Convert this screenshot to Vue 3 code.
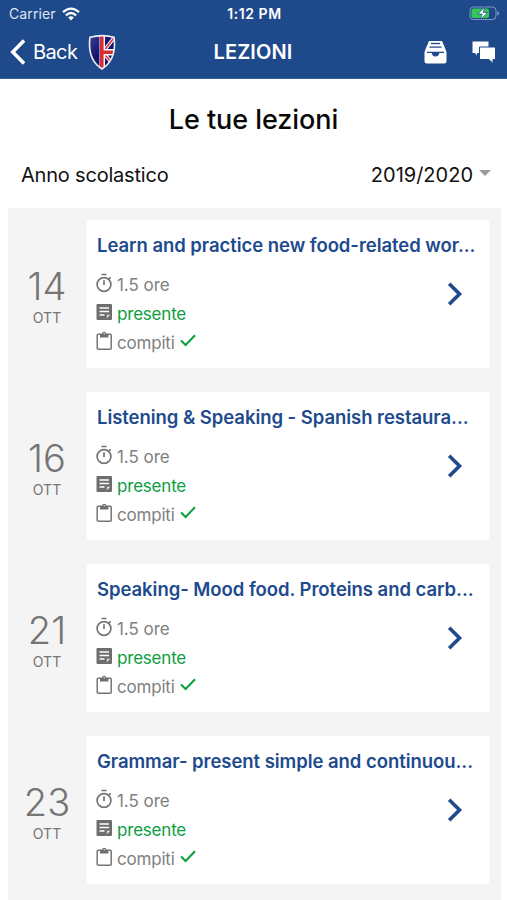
<template>
  <div class="screen">
    <header class="header">
      <!-- Status bar -->
      <div class="status-bar">
        <div class="carrier">
          <span>Carrier</span>
          <svg class="wifi" viewBox="0 0 18 14" fill="none" stroke="#fff" stroke-width="2.3">
            <path d="M1 5.2Q9-2 17 5.2" />
            <path d="M3.9 8.3Q9 3.7 14.1 8.3" />
            <path d="M6.2 10.4Q9 8 11.8 10.4L9 13.5Z" fill="#fff" stroke="none" />
          </svg>
        </div>
        <div class="clock">1:12 PM</div>
        <svg class="battery" viewBox="0 0 31 15">
          <rect x="1" y="1" width="26" height="12.5" rx="3.5" fill="none" stroke="#7f9bc4" />
          <rect x="2.5" y="2.5" width="17.5" height="9.5" rx="2" fill="#35c759" />
          <path d="M28.3 5v4.6q1.8-.7 1.8-2.3T28.3 5Z" fill="#7f9bc4" />
          <path d="M15.5 1.2L8.8 8h4.4l-1.6 5.4L18.6 6.5h-4.4Z" fill="#fff" stroke="#1e498b" stroke-width=".7" />
        </svg>
      </div>

      <!-- Navigation bar -->
      <div class="nav-bar">
        <div class="nav-left">
          <svg class="back-arrow" viewBox="0 0 16 26" fill="none" stroke="#fff" stroke-width="3.6">
            <path d="M14 1.5L2.8 13L14 24.5" />
          </svg>
          <span class="back">Back</span>
          <svg class="crest" viewBox="0 0 28 36">
            <defs>
              <clipPath id="shield">
                <path d="M2 2.700Q14-.5 26 2.700Q29 25 14 34.500Q-1 25 2 2.700Z" />
              </clipPath>
              <linearGradient id="navy" x1="0" y1="0" x2="1" y2="1">
                <stop offset="0" stop-color="#41459a" />
                <stop offset=".45" stop-color="#14146c" />
              </linearGradient>
            </defs>
            <g clip-path="url(#shield)">
              <rect width="28" height="36" fill="url(#navy)" />
              <path d="M15 17.500L27 2M15 17.500L27 33" stroke="#fff" stroke-width="3.600" />
              <path d="M15 17.500L27 2M15 17.500L27 33" stroke="#d9323b" stroke-width="1.600" />
              <path d="M11.500 0h5.500v14.500H28v6.500H17v15h-5.500Z" fill="#fff" />
              <path d="M12 0h3.600v16H28v3.500H15.600V36H12Z" fill="#d62c32" />
            </g>
            <path d="M2 2.700Q14-.5 26 2.700Q29 25 14 34.500Q-1 25 2 2.700Z" fill="none" stroke="#f1eef0" stroke-width="1.600" />
          </svg>
        </div>
        <div class="nav-title">LEZIONI</div>
        <div class="nav-right">
          <svg class="inbox" viewBox="0 0 23 23">
            <path d="M5.700 0h11.600q1 0 1.300 1l1.100 3.500H3.300L4.400 1q.3-1 1.300-1Z" fill="#fff" />
            <path d="M7 2.500h9" stroke="#1e498b" stroke-width="1.300" />
            <path d="M3.200 4h16.600l2.700 7v9q0 2.500-2.500 2.500H3Q.5 22.500.5 20v-9Z" fill="#fff" />
            <path d="M5.500 6.200h12M3 11.300h17" fill="none" stroke="#1e498b" stroke-width="1.300" />
            <path d="M7.500 11h8q-.5 4.600-4 4.600t-4-4.600Z" fill="#1e498b" />
          </svg>
          <svg class="chat" viewBox="0 0 24 24">
            <path d="M.5 1.500h16v11.500h-11.500v2.500L3 13H.5Z" fill="#fff" />
            <path d="M7.500 7h16v12.500H21v4l-4-4H7.500Z" fill="#fff" stroke="#1e498b" stroke-width="1" />
          </svg>
        </div>
      </div>
    </header>

    <h1 class="page-title">Le tue lezioni</h1>

    <div class="year-row">
      <span class="year-label">Anno scolastico</span>
      <span class="year-select">
        <span>2019/2020</span>
        <span class="caret"></span>
      </span>
    </div>

    <!-- Lessons -->
    <main class="lessons">
      <div v-for="lesson in lessons" :key="lesson.day" class="lesson">
        <div class="date">
          <span class="day">{{ lesson.day }}</span>
          <span class="month">OTT</span>
        </div>
        <div class="card">
          <h2 class="lesson-title">{{ lesson.title }}</h2>
          <div class="details">
            <div>
              <div class="info-row">
                <svg class="icon" viewBox="0 0 17 20" fill="none" stroke="#757575" stroke-width="1.7">
                  <circle cx="8" cy="11.500" r="6.900" />
                  <path d="M5.500 1.500h5M8 7.200V12M12.700 6.300l1.900-1.900" />
                </svg>
                <span class="hours">1.5 ore</span>
              </div>
              <div class="info-row green">
                <svg class="icon" viewBox="0 0 17 20">
                  <path d="M1.500 2h13.500q1 0 1 1v14q0 1-1 1H1.500q-1 0-1-1V3q0-1 1-1Z" fill="#6e6e6e" />
                  <path d="M3.500 6h9.500M3.500 9.500h9.500M3.500 13h5" stroke="#fff" stroke-width="1.300" />
                  <path d="M10.800 16.300v-3.500h3.500Z" fill="#ddd" />
                </svg>
                <span>presente</span>
              </div>
              <div class="info-row">
                <svg class="icon" viewBox="0 0 17 20">
                  <rect x="1.200" y="3.200" width="14" height="15" rx="1" fill="none" stroke="#757575" stroke-width="1.500" />
                  <path d="M4 3h2q.3-2.300 2.200-2.300T10.400 3h2v3.500H4Z" fill="#6e6e6e" />
                  <circle cx="8.200" cy="2.700" r=".7" fill="#fff" />
                </svg>
                <span>compiti</span>
                <svg class="check" viewBox="0 0 16 13" fill="none" stroke="#0a9e3c" stroke-width="2">
                  <path d="M1 6.500L5.600 11L15 1.200" />
                </svg>
              </div>
            </div>
            <svg class="chevron" viewBox="0 0 16 24" fill="none" stroke="#1e4a8e" stroke-width="3.600">
              <path d="M2.200 1.800L12.500 12L2.200 22.200" />
            </svg>
          </div>
        </div>
      </div>
    </main>
  </div>
</template>

<script setup>
import { ref } from 'vue'

const lessons = ref([
  { day: 14, title: 'Learn and practice new food-related wor...' },
  { day: 16, title: 'Listening & Speaking - Spanish restaura...' },
  { day: 21, title: 'Speaking- Mood food. Proteins and carb...' },
  { day: 23, title: 'Grammar- present simple and continuou...' }
])
</script>

<style>
body {
  margin: 0;
  overflow: hidden;
}
</style>

<style scoped>
.screen {
  height: 900px;
  overflow: hidden;
  background: #fff;
  color: #111;
  font-family: Inter, "Liberation Sans", sans-serif;
  white-space: nowrap;
}

.header {
  box-sizing: border-box;
  height: 79px;
  background: #1e498b;
  border-bottom: 1px solid #38619f;
  color: #fff;
}

/* Status bar */
.status-bar {
  display: grid;
  grid-template-columns: 1fr auto 1fr;
  align-items: center;
  height: 27px;
  padding: 0 7px 0 9px;
  font-size: 14px;
}

.carrier {
  display: flex;
  align-items: center;
  gap: 6px;
  letter-spacing: 0.1px;
  color: #dfe7f3;
}

.wifi {
  width: 18px;
  height: 14px;
}

.clock {
  font-size: 14px;
  font-weight: 600;
  letter-spacing: 0.55px;
}

.battery {
  justify-self: end;
  width: 31px;
  height: 15px;
}

/* Navigation bar */
.nav-bar {
  display: grid;
  grid-template-columns: 1fr auto 1fr;
  align-items: center;
  height: 50px;
  padding: 0 11px 0 10px;
}

.nav-left,
.nav-right {
  display: flex;
  align-items: center;
}

.back-arrow {
  width: 16px;
  height: 26px;
  margin-right: 7px;
}

.back {
  width: 55px;
  font-size: 20px;
  letter-spacing: -0.6px;
}

.crest {
  width: 28px;
  height: 37px;
}

.nav-title {
  font-size: 20px;
  font-weight: 600;
  letter-spacing: 0.1px;
}

.nav-right {
  justify-content: flex-end;
  gap: 25px;
}

.inbox {
  width: 23px;
  height: 23px;
}

.chat {
  width: 24px;
  height: 24px;
}

.page-title {
  margin: 0;
  height: 80px;
  line-height: 81px;
  text-align: center;
  font-size: 27px;
  font-weight: 500;
  letter-spacing: -0.05px;
  color: #080808;
}

.year-row {
  display: flex;
  justify-content: space-between;
  align-items: center;
  height: 31px;
  padding: 0 16px 0 21px;
  margin-bottom: 18px;
  font-size: 20px;
}

.year-label {
  letter-spacing: -0.2px;
}

.year-select {
  display: flex;
  align-items: center;
  gap: 6px;
}

.caret {
  margin-bottom: 4px;
  border: 6px solid transparent;
  border-top-color: #9b9b9b;
  border-bottom: 0;
}

/* Lessons list */
.lessons {
  display: flex;
  flex-direction: column;
  gap: 24px;
  margin: 0 6px 0 8px;
  padding: 12px 12px 24px 0;
  background: #f4f4f4;
}

.lesson {
  display: flex;
  height: 148px;
}

.date {
  display: flex;
  flex-direction: column;
  align-items: center;
  justify-content: center;
  width: 79px;
  padding: 5px 1px 0 0;
  box-sizing: border-box;
  color: #757575;
}

.day {
  font-size: 38px;
  font-weight: 350;
  line-height: 42px;
}

.month {
  margin-top: 1px;
  font-size: 14px;
  line-height: 20px;
}

.card {
  flex: 1;
  min-width: 0;
  box-sizing: border-box;
  padding: 11px 10px 0 9px;
  background: #fff;
}

.lesson-title {
  margin: 0 0 11px 1px;
  font-size: 18.5px;
  font-weight: 600;
  line-height: 28px;
  letter-spacing: -0.05px;
  color: #1e4a8e;
}

.details {
  display: flex;
  justify-content: space-between;
}

.info-row {
  display: flex;
  align-items: center;
  height: 29.2px;
  font-size: 17px;
  letter-spacing: -0.2px;
  color: #808080;
}

.hours {
  letter-spacing: -0.05px;
}

.green {
  color: #0a9e3c;
}

.icon {
  width: 17px;
  height: 20px;
  margin-right: 4px;
  margin-bottom: 4px;
}

.check {
  width: 16px;
  height: 13px;
  margin: 0 0 4px 5px;
}

.chevron {
  width: 16px;
  height: 24px;
  margin: 12px 16px 0 0;
}
</style>
